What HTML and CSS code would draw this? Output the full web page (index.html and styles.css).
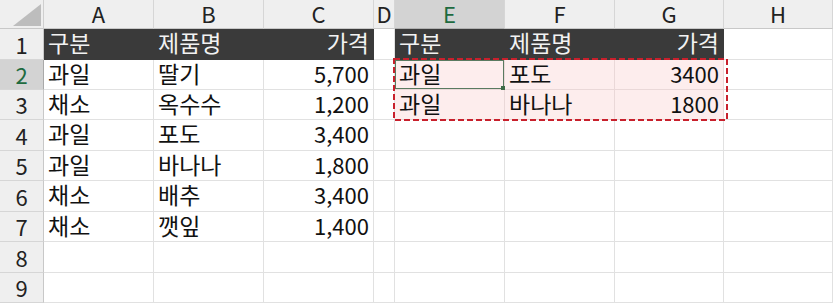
FILE: index.html
```html
<!DOCTYPE html>
<html lang="ko">
<head>
<meta charset="utf-8">
<title>Sheet</title>
<link rel="stylesheet" href="styles.css">
</head>
<body>
<div class="wrap">
  <div class="sheet">
    <div class="corner"><svg class="tri" width="30" height="24" viewBox="0 0 30 24"><polygon points="29,1 29,23 1,23" fill="#bdbdbd"/></svg></div>
    <div class="ch">A</div><div class="ch">B</div><div class="ch">C</div><div class="ch">D</div><div class="ch selh">E</div><div class="ch">F</div><div class="ch">G</div><div class="ch">H</div>

    <div class="rh">1</div>
    <div class="c dk">구분</div><div class="c dk">제품명</div><div class="c dk r">가격</div><div class="c"></div>
    <div class="c dk">구분</div><div class="c dk">제품명</div><div class="c dk r">가격</div><div class="c"></div>

    <div class="rh selr">2</div>
    <div class="c">과일</div><div class="c">딸기</div><div class="c r n">5,700</div><div class="c"></div>
    <div class="c pk active">과일</div><div class="c pk">포도</div><div class="c pk r n">3400</div><div class="c"></div>

    <div class="rh">3</div>
    <div class="c">채소</div><div class="c">옥수수</div><div class="c r n">1,200</div><div class="c"></div>
    <div class="c pk">과일</div><div class="c pk">바나나</div><div class="c pk r n">1800</div><div class="c"></div>

    <div class="rh">4</div>
    <div class="c">과일</div><div class="c">포도</div><div class="c r n">3,400</div><div class="c"></div>
    <div class="c"></div><div class="c"></div><div class="c"></div><div class="c"></div>

    <div class="rh">5</div>
    <div class="c">과일</div><div class="c">바나나</div><div class="c r n">1,800</div><div class="c"></div>
    <div class="c"></div><div class="c"></div><div class="c"></div><div class="c"></div>

    <div class="rh">6</div>
    <div class="c">채소</div><div class="c">배추</div><div class="c r n">3,400</div><div class="c"></div>
    <div class="c"></div><div class="c"></div><div class="c"></div><div class="c"></div>

    <div class="rh">7</div>
    <div class="c">채소</div><div class="c">깻잎</div><div class="c r n">1,400</div><div class="c"></div>
    <div class="c"></div><div class="c"></div><div class="c"></div><div class="c"></div>

    <div class="rh">8</div>
    <div class="c"></div><div class="c"></div><div class="c"></div><div class="c"></div>
    <div class="c"></div><div class="c"></div><div class="c"></div><div class="c"></div>

    <div class="rh">9</div>
    <div class="c"></div><div class="c"></div><div class="c"></div><div class="c"></div>
    <div class="c"></div><div class="c"></div><div class="c"></div><div class="c"></div>
  </div>
  <svg class="ants" width="336" height="64" viewBox="0 0 336 64"><rect x="1" y="1" width="333" height="61" fill="none" stroke="#c8202c" stroke-width="2" stroke-dasharray="6 3"/></svg>
</div>
</body>
</html>
```
FILE: styles.css
```css
html, body {
  margin: 0;
  padding: 0;
  background: #ffffff;
}
.wrap {
  position: relative;
  width: 836px;
  height: 307px;
  overflow: hidden;
}
.sheet {
  display: grid;
  grid-template-columns: 44px 110px 110px 110px 21px 110px 110px 109px 109px;
  grid-template-rows: 29px 31px 30px 30px 31px 30px 31px 30px 31px 30px;
  font-family: "Noto Sans CJK KR", "Noto Sans", sans-serif;
  font-size: 23px;
  color: #111111;
}
.sheet > div {
  box-sizing: border-box;
  min-width: 0;
  white-space: nowrap;
}
.corner {
  background: #efefef;
  border-right: 1px solid #cfcfcf;
  border-bottom: 1px solid #c8c8c8;
  display: flex;
  align-items: flex-start;
  justify-content: flex-end;
  padding: 3px 1px 0 0;
}
.tri { display: block; }
.ch {
  background: #efefef;
  border-right: 1px solid #d6d6d6;
  border-bottom: 1px solid #c8c8c8;
  display: flex;
  align-items: center;
  justify-content: center;
  color: #222222;
  font-size: 22px;
  line-height: 1.2;
  padding-bottom: 1px;
}
.selh {
  background: #d3d3d3;
  color: #1e6b40;
  border-bottom-color: #b0b0b0;
}
.rh {
  background: #efefef;
  border-right: 1px solid #c8c8c8;
  border-bottom: 1px solid #d6d6d6;
  display: flex;
  align-items: center;
  justify-content: center;
  color: #222222;
  font-size: 22px;
  line-height: 1.2;
}
.selr {
  background: #d3d3d3;
  color: #1e6b40;
  border-right-color: #a9a9a9;
}
.c {
  border-right: 1px solid #e1e1e1;
  border-bottom: 1px solid #e1e1e1;
  display: flex;
  align-items: center;
  padding: 0 4px 3px 4px;
  line-height: 1.15;
}
.n { font-size: 22px; padding-bottom: 2px; }
.r { justify-content: flex-end; }
.dk {
  background: #3a3a3a;
  color: #f2f2f2;
  border-right-color: #3a3a3a;
  border-bottom-color: #3a3a3a;
}
.pk {
  background: #fdeded;
  border-right-color: #ead8d8;
  border-bottom-color: #ead8d8;
}
.active {
  position: relative;
  box-shadow: inset 0 0 0 1px #5a7a60;
}
.active::after {
  content: "";
  position: absolute;
  right: -1px;
  bottom: -1px;
  width: 4px;
  height: 4px;
  background: #3f6b47;
}
.ants {
  position: absolute;
  left: 393px;
  top: 58px;
  display: block;
}
```
